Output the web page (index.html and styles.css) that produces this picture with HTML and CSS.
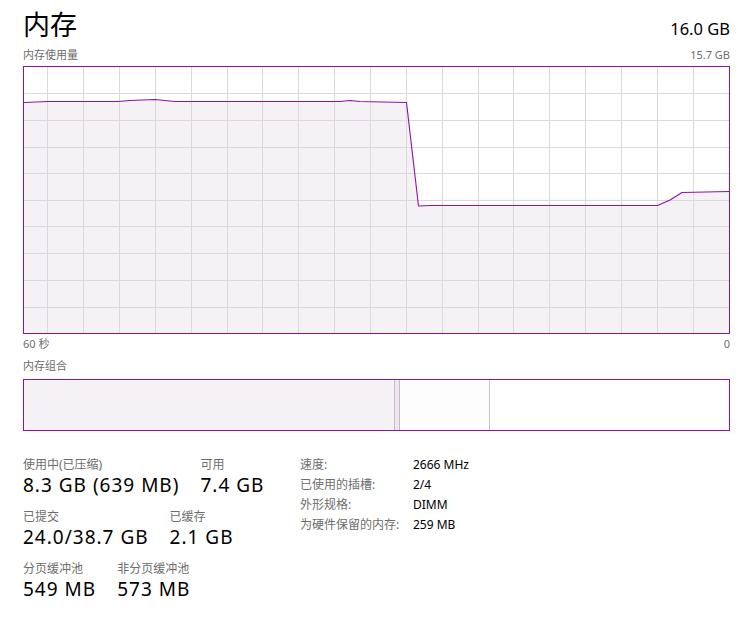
FILE: index.html
```html
<!DOCTYPE html>
<html lang="zh-CN">
<head>
<meta charset="utf-8">
<title>内存</title>
<link rel="stylesheet" href="styles.css">
</head>
<body>
<div class="page">
  <header class="head">
    <h1 class="title">内存</h1>
    <span class="total">16.0 GB</span>
  </header>
  <div class="axis axis-top">
    <span>内存使用量</span>
    <span>15.7 GB</span>
  </div>
  <div class="graph">
    <svg class="graph-svg" width="705" height="266" viewBox="24 67 705 266" xmlns="http://www.w3.org/2000/svg">
      <polygon class="area" points="24,102.5 48,101.5 118,101.5 130,100.5 155,99.5 175,101.5 340,101.5 350,100.5 360,101.5 406.5,102.5 418.5,206 430,205.5 657.5,205.5 670,200 682,192.5 729,191.5 729,333 24,333"/>
      <g class="grid">
        <line x1="47.5" y1="67" x2="47.5" y2="333"/>
        <line x1="83.5" y1="67" x2="83.5" y2="333"/>
        <line x1="119.5" y1="67" x2="119.5" y2="333"/>
        <line x1="155.5" y1="67" x2="155.5" y2="333"/>
        <line x1="191.5" y1="67" x2="191.5" y2="333"/>
        <line x1="227.5" y1="67" x2="227.5" y2="333"/>
        <line x1="262.5" y1="67" x2="262.5" y2="333"/>
        <line x1="298.5" y1="67" x2="298.5" y2="333"/>
        <line x1="334.5" y1="67" x2="334.5" y2="333"/>
        <line x1="370.5" y1="67" x2="370.5" y2="333"/>
        <line x1="406.5" y1="67" x2="406.5" y2="333"/>
        <line x1="442.5" y1="67" x2="442.5" y2="333"/>
        <line x1="478.5" y1="67" x2="478.5" y2="333"/>
        <line x1="513.5" y1="67" x2="513.5" y2="333"/>
        <line x1="549.5" y1="67" x2="549.5" y2="333"/>
        <line x1="585.5" y1="67" x2="585.5" y2="333"/>
        <line x1="621.5" y1="67" x2="621.5" y2="333"/>
        <line x1="657.5" y1="67" x2="657.5" y2="333"/>
        <line x1="693.5" y1="67" x2="693.5" y2="333"/>
        <line x1="24" y1="93.5" x2="729" y2="93.5"/>
        <line x1="24" y1="120.5" x2="729" y2="120.5"/>
        <line x1="24" y1="147.5" x2="729" y2="147.5"/>
        <line x1="24" y1="173.5" x2="729" y2="173.5"/>
        <line x1="24" y1="200.5" x2="729" y2="200.5"/>
        <line x1="24" y1="226.5" x2="729" y2="226.5"/>
        <line x1="24" y1="253.5" x2="729" y2="253.5"/>
        <line x1="24" y1="280.5" x2="729" y2="280.5"/>
        <line x1="24" y1="307.5" x2="729" y2="307.5"/>
      </g>
      <polyline class="usage" points="24,102.5 48,101.5 118,101.5 130,100.5 155,99.5 175,101.5 340,101.5 350,100.5 360,101.5 406.5,102.5 418.5,206 430,205.5 657.5,205.5 670,200 682,192.5 729,191.5"/>
    </svg>
  </div>
  <div class="axis axis-bottom">
    <span>60 秒</span>
    <span>0</span>
  </div>
  <div class="axis section-label">内存组合</div>
  <div class="composition">
    <div class="seg seg-inuse"></div>
    <div class="seg seg-modified"></div>
    <div class="seg seg-standby"></div>
    <div class="seg seg-free"></div>
  </div>
  <div class="stats">
    <div class="stats-left">
      <div class="stat-row">
        <div class="stat"><div class="label">使用中(已压缩)</div><div class="value">8.3 GB (639 MB)</div></div>
        <div class="stat"><div class="label">可用</div><div class="value">7.4 GB</div></div>
      </div>
      <div class="stat-row">
        <div class="stat"><div class="label">已提交</div><div class="value">24.0/38.7 GB</div></div>
        <div class="stat"><div class="label">已缓存</div><div class="value">2.1 GB</div></div>
      </div>
      <div class="stat-row">
        <div class="stat"><div class="label">分页缓冲池</div><div class="value">549 MB</div></div>
        <div class="stat"><div class="label">非分页缓冲池</div><div class="value">573 MB</div></div>
      </div>
    </div>
    <dl class="stats-right">
      <dt>速度:</dt><dd>2666 MHz</dd>
      <dt>已使用的插槽:</dt><dd>2/4</dd>
      <dt>外形规格:</dt><dd>DIMM</dd>
      <dt>为硬件保留的内存:</dt><dd>259 MB</dd>
    </dl>
  </div>
</div>
</body>
</html>
```

FILE: styles.css
```css
* { box-sizing: border-box; }
html, body { margin: 0; padding: 0; background: #ffffff; }
body {
  font-family: "Noto Sans", "Noto Sans CJK SC", sans-serif;
  color: #000000;
}
.page {
  width: 747px;
  padding: 8px 17px 0 23px;
}
.head {
  display: flex;
  justify-content: space-between;
  align-items: baseline;
  height: 32px;
}
.title {
  margin: 0;
  font-family: "Noto Sans CJK SC", sans-serif;
  font-weight: 400;
  font-size: 27px;
  line-height: 32px;
}
.total {
  font-size: 16.5px;
  line-height: 32px;
}
.axis {
  display: flex;
  justify-content: space-between;
  font-size: 11px;
  line-height: 14px;
  color: #6d6d6d;
}
.axis-top { margin-top: 8px; }
.graph {
  margin-top: 4px;
  width: 707px;
  height: 268px;
  border: 1px solid #8b12ae;
}
.graph-svg { display: block; }
.area { fill: #f4f2f5; }
.grid line { stroke: #dadada; stroke-width: 1; }
.usage { fill: none; stroke: #8b12ae; stroke-width: 1.1; stroke-linejoin: round; }
.axis-bottom { margin-top: 3px; }
.section-label { margin-top: 8px; }
.composition {
  margin-top: 6px;
  width: 707px;
  height: 52px;
  border: 1px solid #8b12ae;
  display: flex;
}
.seg { height: 100%; }
.seg-inuse { width: 371px; background: #f4f2f5; border-right: 1px solid #c4bcc8; }
.seg-modified { width: 5px; background: #ede8f0; border-right: 1px solid #c4bcc8; }
.seg-standby { width: 90px; background: #fdfdfd; border-right: 1px solid #c4c4c4; }
.seg-free { flex: 1; background: #ffffff; }
.stats {
  display: flex;
  margin-top: 26px;
}
.stats-left { width: 277px; }
.stat-row {
  display: flex;
  gap: 21px;
  margin-bottom: 12px;
}
.label {
  font-size: 12px;
  line-height: 16px;
  color: #6d6d6d;
}
.value {
  font-size: 19px;
  line-height: 24px;
  letter-spacing: 1px;
  white-space: nowrap;
}
.stats-right {
  margin: -2px 0 0 0;
  display: grid;
  grid-template-columns: 113px auto;
  grid-auto-rows: 20px;
  font-size: 12px;
  line-height: 20px;
}
.stats-right dt { color: #6d6d6d; }
.stats-right dd { margin: 0; color: #000; }
```
